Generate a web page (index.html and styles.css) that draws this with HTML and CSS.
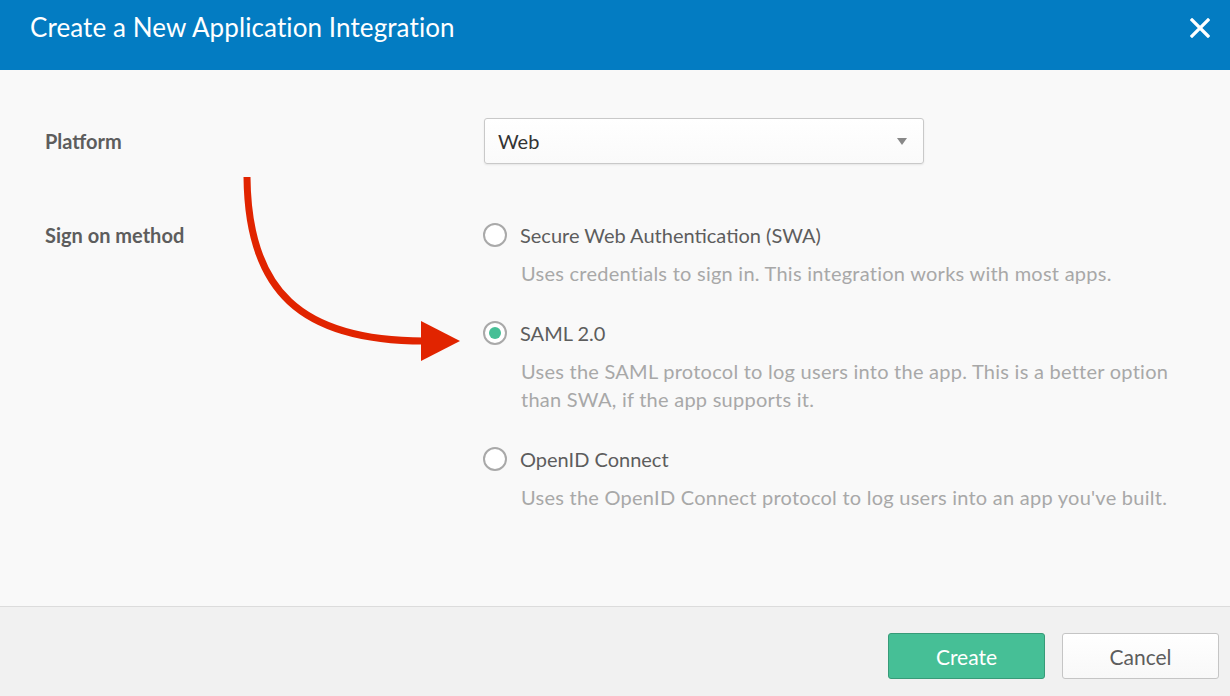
FILE: index.html
```html
<!DOCTYPE html>
<html lang="en">
<head>
    <meta charset="UTF-8">
    <title>Create a New Application Integration</title>
    <link rel="stylesheet" href="styles.css">
</head>
<body>
    <div class="modal">
        <div class="modal-header">
            <h1>Create a New Application Integration</h1>
            <span class="close">
                <svg width="20" height="20" viewBox="0 0 20 20"><path d="M2 2 L18 18 M18 2 L2 18" stroke="#fff" stroke-width="3.2" stroke-linecap="square"/></svg>
            </span>
        </div>

        <div class="modal-body">
            <div class="form-row platform-row">
                <label class="field-label">Platform</label>
                <div class="select">
                    <span>Web</span>
                    <span class="caret"></span>
                </div>
            </div>

            <div class="form-row">
                <label class="field-label method-label">Sign on method</label>
                <div class="options">
                    <div class="option">
                        <div class="option-title"><span class="radio"></span>Secure Web Authentication (SWA)</div>
                        <div class="option-desc">Uses credentials to sign in. This integration works with most apps.</div>
                    </div>
                    <div class="option">
                        <div class="option-title"><span class="radio checked"></span>SAML 2.0</div>
                        <div class="option-desc">Uses the SAML protocol to log users into the app. This is a better option<br>than SWA, if the app supports it.</div>
                    </div>
                    <div class="option">
                        <div class="option-title"><span class="radio"></span>OpenID Connect</div>
                        <div class="option-desc">Uses the OpenID Connect protocol to log users into an app you've built.</div>
                    </div>
                </div>
            </div>

            <!-- стрелка поверх формы -->
            <svg class="arrow" width="240" height="200" viewBox="220 170 240 200">
                <path d="M247 177 C 248 290, 300 341, 424 341" fill="none" stroke="#e12400" stroke-width="7"/>
                <polygon points="421,321 460,341 421,361" fill="#e12400"/>
            </svg>
        </div>

        <div class="modal-footer">
            <button class="btn btn-primary">Create</button>
            <button class="btn">Cancel</button>
        </div>
    </div>
</body>
</html>
```

FILE: styles.css
```css
body {
    margin: 0;
    font-family: Lato, "Open Sans", Arial, sans-serif;
}
.modal {
    width: 1230px;
    height: 696px;
    display: flex;
    flex-direction: column;
    background: #f9f9f9;
    overflow: hidden;
}
.modal-header {
    height: 70px;
    background: #037cc2;
    display: flex;
    justify-content: space-between;
    padding: 0 20px 0 30px;
    box-sizing: border-box;
}
.modal-header h1 {
    margin: 11px 0 0;
    font-size: 26px;
    font-weight: normal;
    line-height: 32px;
    letter-spacing: 0.1px;
    color: #fff;
}
.close {
    margin-top: 18px;
    width: 20px;
    height: 20px;
}
.modal-body {
    flex: 1;
    position: relative;
    padding: 48px 0 0 45px;
    border-bottom: 1px solid #dcdcdc;
}
.form-row {
    display: flex;
}
.platform-row {
    align-items: center;
    margin-bottom: 57px;
}
.field-label {
    width: 439px;
    font-size: 20px;
    font-weight: bold;
    color: #5d5d5d;
}
.method-label {
    line-height: 28px;
}
.select {
    width: 440px;
    height: 46px;
    box-sizing: border-box;
    border: 1px solid #c9c9c9;
    border-radius: 3px;
    background: linear-gradient(#fff, #fafafa);
    box-shadow: 0 1px 2px rgba(0, 0, 0, 0.08);
    display: flex;
    align-items: center;
    justify-content: space-between;
    padding: 0 16px 0 13px;
    font-size: 20px;
    color: #333;
}
.caret {
    width: 0;
    height: 0;
    border-left: 5px solid transparent;
    border-right: 5px solid transparent;
    border-top: 7px solid #888;
}
.option {
    margin-bottom: 32px;
}
.option-title {
    display: flex;
    align-items: center;
    font-size: 20px;
    line-height: 28px;
    color: #5d5d5d;
    margin-left: -1px;
}
.option-desc {
    margin-top: 10px;
    margin-left: 37px;
    font-size: 20px;
    line-height: 28px;
    letter-spacing: 0.25px;
    color: #a8a8a8;
}
.radio {
    width: 24px;
    height: 24px;
    box-sizing: border-box;
    border: 2px solid #a9a9a9;
    border-radius: 50%;
    background: #fff;
    margin-right: 13px;
    display: flex;
    align-items: center;
    justify-content: center;
}
.radio.checked::after {
    content: "";
    width: 12px;
    height: 12px;
    border-radius: 50%;
    background: #46bf96;
}
.arrow {
    position: absolute;
    left: 220px;
    top: 100px;
}
.modal-footer {
    height: 89px;
    background: #f1f1f1;
    display: flex;
    justify-content: flex-end;
    align-items: flex-start;
    gap: 17px;
    padding: 26px 11px 0 0;
    box-sizing: border-box;
}
.btn {
    width: 157px;
    height: 46px;
    border: 1px solid #c5c5c5;
    border-radius: 3px;
    background: linear-gradient(#fff, #f8f8f8);
    font-family: inherit;
    font-size: 21px;
    color: #5d5d5d;
    cursor: pointer;
}
.btn-primary {
    background: #46bf96;
    border-color: #379b78;
    color: #fff;
}
```
